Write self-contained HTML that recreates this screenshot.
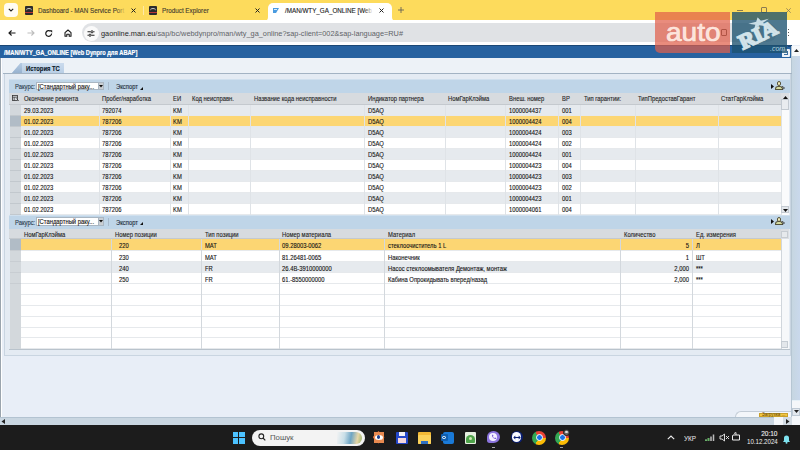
<!DOCTYPE html><html><head><meta charset="utf-8"><style>
*{margin:0;padding:0;box-sizing:border-box}
html,body{width:800px;height:450px;overflow:hidden;background:#e8eef7;font-family:"Liberation Sans", sans-serif;}
.a{position:absolute}
.t{position:absolute;white-space:nowrap;font-size:6.8px;line-height:11px;color:#141414}
.s,.sr{-webkit-text-stroke:0.12px currentColor}
.s{transform:scaleX(.86);transform-origin:0 0}
.sr{transform:scaleX(.86);transform-origin:100% 0}
</style></head><body>
<div class="a" style="left:0;top:0;width:800px;height:20.4px;background:#fddb5c"></div>
<div class="a" style="left:4px;top:3px;width:14px;height:14px;background:#fffcf3;border-radius:4px"></div>
<svg class="a" style="left:8px;top:8px" width="6" height="4" viewBox="0 0 6 4"><path d="M0.8 0.8 L3 3 L5.2 0.8" stroke="#222" stroke-width="1.1" fill="none"/></svg>
<div class="a" style="left:24.5px;top:6px;width:8.5px;height:8.5px;background:#2b2b2b;border-radius:1px"></div>
<div class="a" style="left:25.5px;top:8px;width:6.5px;height:3px;border-top:1px solid #ccc;border-radius:4px 4px 0 0"></div>
<div class="a" style="left:24.5px;top:12px;width:8.5px;height:1px;background:#b33"></div>
<div class="t s" style="left:37.5px;top:4.5px;font-size:7.3px;line-height:12px;color:#3d3a2e">Dashboard - MAN Service Port</div>
<div class="a" style="left:116px;top:4px;width:12px;height:12px;background:linear-gradient(90deg,rgba(253,219,92,0),#fddb5c 80%)"></div>
<svg class="a" style="left:131px;top:7.5px" width="5" height="5" viewBox="0 0 5 5"><path d="M0.5 0.5L4.5 4.5M4.5 0.5L0.5 4.5" stroke="#222" stroke-width="1"/></svg>
<div class="a" style="left:143px;top:6px;width:1px;height:9px;background:#fde9a6"></div>
<div class="a" style="left:148.5px;top:6px;width:8.5px;height:8.5px;background:#2b2b2b;border-radius:1px"></div>
<div class="a" style="left:149.5px;top:8px;width:6.5px;height:3px;border-top:1px solid #ccc;border-radius:4px 4px 0 0"></div>
<div class="a" style="left:148.5px;top:12px;width:8.5px;height:1px;background:#b33"></div>
<div class="t s" style="left:161.5px;top:4.5px;font-size:7.3px;line-height:12px;color:#3d3a2e">Product Explorer</div>
<svg class="a" style="left:255px;top:7.5px" width="5" height="5" viewBox="0 0 5 5"><path d="M0.5 0.5L4.5 4.5M4.5 0.5L0.5 4.5" stroke="#222" stroke-width="1"/></svg>
<div class="a" style="left:268px;top:3px;width:124px;height:18px;background:#fff;border-radius:5px 5px 0 0"></div>
<div class="a" style="left:264px;top:15px;width:4px;height:6px;background:#fff"></div>
<div class="a" style="left:260px;top:11px;width:8px;height:10px;background:#fddb5c;border-radius:0 0 4px 0"></div>
<div class="a" style="left:392px;top:15px;width:4px;height:6px;background:#fff"></div>
<div class="a" style="left:392px;top:11px;width:8px;height:10px;background:#fddb5c;border-radius:0 0 0 4px"></div>
<div class="a" style="left:272.5px;top:8px;width:6.5px;height:5px;background:#4a9be0;clip-path:polygon(0 0,100% 0,55% 100%,0 100%)"></div>
<div class="a" style="left:273.5px;top:9.3px;width:3.5px;height:1px;background:#fff;opacity:.8"></div>
<div class="t s" style="left:285px;top:4.5px;font-size:7.3px;line-height:12px;color:#202020">/MAN/WTY_GA_ONLINE [Web</div>
<div class="a" style="left:364px;top:4px;width:12px;height:12px;background:linear-gradient(90deg,rgba(255,255,255,0),#fff 75%)"></div>
<svg class="a" style="left:379px;top:7.5px" width="5" height="5" viewBox="0 0 5 5"><path d="M0.5 0.5L4.5 4.5M4.5 0.5L0.5 4.5" stroke="#222" stroke-width="1"/></svg>
<svg class="a" style="left:397.5px;top:7px" width="6" height="6" viewBox="0 0 6 6"><path d="M3 0V6M0 3H6" stroke="#555" stroke-width="0.8"/></svg>
<div class="a" style="left:737px;top:10px;width:6px;height:0.8px;background:#8a7a50"></div>
<div class="a" style="left:761px;top:6.5px;width:6px;height:6px;border:0.8px solid #8a7a50;border-radius:1px"></div>
<svg class="a" style="left:785.5px;top:7.5px" width="5" height="5" viewBox="0 0 5 5"><path d="M0.3 0.3L4.7 4.7M4.7 0.3L0.3 4.7" stroke="#8a7a50" stroke-width="0.8"/></svg>
<div class="a" style="left:0;top:20.4px;width:800px;height:25px;background:#fff"></div>
<svg class="a" style="left:8px;top:30px" width="8" height="6" viewBox="0 0 8 6"><path d="M7.5 3H1M3.6 0.5L1 3L3.6 5.5" stroke="#1a1a1a" stroke-width="1.15" fill="none"/></svg>
<svg class="a" style="left:26.5px;top:30px" width="8" height="6" viewBox="0 0 8 6"><path d="M0.5 3H7M4.4 0.5L7 3L4.4 5.5" stroke="#bdbdbd" stroke-width="1.1" fill="none"/></svg>
<svg class="a" style="left:45px;top:29.5px" width="8" height="7" viewBox="0 0 8 7"><path d="M6.6 3.6A2.9 2.9 0 1 1 5.6 1.3" stroke="#1a1a1a" stroke-width="1.15" fill="none"/><path d="M4.6 0.2H7.2V2.8Z" fill="#1a1a1a"/></svg>
<svg class="a" style="left:63.5px;top:29px" width="8" height="8" viewBox="0 0 8 8"><path d="M1 3.6L4 1L7 3.6V7.3H5.2V5.2H2.8V7.3H1Z" stroke="#1a1a1a" stroke-width="1.1" fill="none" stroke-linejoin="round"/></svg>
<div class="a" style="left:82px;top:22.6px;width:695px;height:19.8px;background:#e0e2e5;border-radius:10px"></div>
<div class="a" style="left:83.5px;top:25.5px;width:15px;height:15px;background:#fafafa;border-radius:8px"></div>
<svg class="a" style="left:87px;top:29.5px" width="8" height="7" viewBox="0 0 8 7"><path d="M0.5 1.8H3.5M6.5 1.8H7.5M0.5 5.2H1.5M4.5 5.2H7.5" stroke="#222" stroke-width="1.1"/><circle cx="5" cy="1.8" r="1.1" stroke="#222" stroke-width="1" fill="none"/><circle cx="3" cy="5.2" r="1.1" stroke="#222" stroke-width="1" fill="none"/></svg>
<div class="t" style="left:100.5px;top:28px;font-size:7.6px;line-height:12px;color:#1f1f1f;transform:scaleX(.968);transform-origin:0 0">gaonline.man.eu<span style="color:#5f6368">/sap/bc/webdynpro/man/wty_ga_online?sap-client=002&amp;sap-language=RU#</span></div>
<div class="a" style="left:787.8px;top:28.8px;width:1.6px;height:1.6px;background:#222;border-radius:50%"></div>
<div class="a" style="left:787.8px;top:31.8px;width:1.6px;height:1.6px;background:#222;border-radius:50%"></div>
<div class="a" style="left:787.8px;top:34.8px;width:1.6px;height:1.6px;background:#222;border-radius:50%"></div>
<div class="a" style="left:0;top:45.3px;width:791.5px;height:12.5px;background:#2762a0;border-top:1px solid #1b4775"></div>
<div class="t s" style="left:4px;top:46.8px;font-size:6.6px;line-height:11px;color:#fff;font-weight:bold;-webkit-text-stroke:0.2px #fff">/MAN/WTY_GA_ONLINE [Web Dynpro для ABAP]</div>
<div class="a" style="left:782px;top:48.5px;width:8px;height:8px;background:#eef3f8;border-radius:1px"></div>
<div class="a" style="left:784px;top:50.5px;width:4px;height:4px;border-right:1.2px solid #3a6ea0;border-bottom:1.2px solid #3a6ea0"></div>
<div class="a" style="left:790.8px;top:46px;width:9.2px;height:371px;background:#e6f1f8;border-left:1px solid #b6c6d3"></div>
<div class="a" style="left:792px;top:56px;width:8px;height:344px;background:linear-gradient(90deg,#c6d6e1,#c9d8ec)"></div>
<div class="a" style="left:791.5px;top:46px;width:8.5px;height:10px;background:#f7f9fb"></div>
<svg class="a" style="left:793.5px;top:49px" width="5" height="3" viewBox="0 0 5 3"><path d="M0 3H5L2.5 0Z" fill="#222"/></svg>
<div class="a" style="left:791.5px;top:400.5px;width:8.5px;height:16.5px;background:#f4f7fa"></div>
<div class="a" style="left:791.5px;top:407.5px;width:8.5px;height:8px;background:#e3e9ef;border:1px solid #bfcad5"></div>
<svg class="a" style="left:793.5px;top:410px" width="5" height="3" viewBox="0 0 5 3"><path d="M0 0H5L2.5 3Z" fill="#222"/></svg>
<div class="a" style="left:788px;top:46px;width:3.3px;height:11.8px;background:#2762a0;border-top:1px solid #1b4775"></div>
<div class="a" style="left:782px;top:48.5px;width:8px;height:8px;background:#eef3f8;border-radius:1px"></div>
<div class="a" style="left:784px;top:50.5px;width:4px;height:4px;border-right:1.2px solid #3a6ea0;border-bottom:1.2px solid #3a6ea0"></div>
<div class="a" style="left:0;top:58px;width:2px;height:359px;background:#9aa4ad;border-right:1px solid #fff"></div>
<div class="a" style="left:3px;top:57.8px;width:788px;height:15.5px;background:#edf2f7"></div>
<div class="a" style="left:3px;top:73px;width:788.5px;height:1px;background:#a3b3c3"></div>
<div class="a" style="left:12px;top:62.5px;width:52px;height:10.5px;background:linear-gradient(180deg,#cbdbed,#b9cfe6);clip-path:polygon(9px 0,100% 0,100% 100%,0 100%);"></div>
<div class="a" style="left:12px;top:62.5px;width:10px;height:10.5px;background:linear-gradient(180deg,#b5cbe3,#98b2cf);clip-path:polygon(9px 0,100% 0,100% 100%,0 100%);"></div>
<div class="t s" style="left:25.5px;top:62.8px;font-size:6.8px;line-height:11px;color:#0a1626;font-weight:bold">История ТС</div>
<div class="a" style="left:4px;top:74px;width:786.5px;height:282px;background:#e4ebf3;border:1px solid #c9d5e1;border-top:none"></div>
<div class="a" style="left:9px;top:79px;width:781px;height:13.5px;background:#bfd5e8;border-top:1px solid #d0e0ee"></div>
<div class="t s" style="left:15px;top:80.5px;font-size:6.8px;line-height:12.5px;color:#2a3a4c">Ракурс:</div>
<div class="a" style="left:36.3px;top:81.7px;width:67.7px;height:8.6px;background:#fff;border:1px solid #a9b6c2;border-right:none"></div>
<div class="t s" style="left:37.5px;top:81.5px;font-size:6.8px;line-height:9px;color:#111">[Стандартный раку...</div>
<div class="a" style="left:98.2px;top:81.7px;width:5.8px;height:8.6px;background:#c9ced3;border:1px solid #a9b6c2"></div>
<svg class="a" style="left:99.2px;top:84.7px" width="4" height="3" viewBox="0 0 4 3"><path d="M0 0H4L2 2.5Z" fill="#111"/></svg>
<div class="a" style="left:108px;top:82px;width:1px;height:8px;background:#a7bacc"></div>
<div class="t s" style="left:115.5px;top:80.5px;font-size:6.8px;line-height:12.5px;color:#1c2a38">Экспорт</div>
<svg class="a" style="left:139.5px;top:86.5px" width="3" height="3" viewBox="0 0 3 3"><path d="M0 3H3V0Z" fill="#111"/></svg>
<svg class="a" style="left:770.5px;top:83.5px" width="3" height="5" viewBox="0 0 3 5"><path d="M0 0L3 2.5L0 5Z" fill="#111"/></svg>
<div class="a" style="left:776.5px;top:81.3px;width:4.5px;height:4.5px;border-radius:50%;background:#f1ebb8;border:1px solid #55523a"></div>
<div class="a" style="left:775px;top:85.6px;width:7.5px;height:4.2px;border-radius:4px 4px 1px 1px;background:#d4dba0;border:1px solid #55523a"></div>
<svg class="a" style="left:781.5px;top:85.5px" width="3" height="4" viewBox="0 0 3 4"><path d="M0 0.3L2.6 2L0 3.7" stroke="#333" stroke-width="0.8" fill="none"/></svg>
<div class="a" style="left:9px;top:92.7px;width:772px;height:12px;background:#d7dbdf;border-bottom:1px solid #c4c9ce"></div>
<svg class="a" style="left:12px;top:95.10000000000001px" width="7" height="6" viewBox="0 0 7 6"><rect x="0.5" y="0.5" width="5" height="5" fill="none" stroke="#333" stroke-width="0.8"/><path d="M0.5 2.2H5.5M2.2 2.2V5.5" stroke="#333" stroke-width="0.7"/><path d="M4.5 3.5L6.8 5.8" stroke="#333" stroke-width="0.8"/></svg>
<div class="t s" style="left:24.0px;top:93.2px;color:#1e1e1e">Окончание ремонта</div>
<div class="t s" style="left:102.0px;top:93.2px;color:#1e1e1e">Пробег/наработка</div>
<div class="t s" style="left:173.0px;top:93.2px;color:#1e1e1e">ЕИ</div>
<div class="t s" style="left:191.5px;top:93.2px;color:#1e1e1e">Код неисправн.</div>
<div class="t s" style="left:253.5px;top:93.2px;color:#1e1e1e">Название кода неисправности</div>
<div class="t s" style="left:367.5px;top:93.2px;color:#1e1e1e">Индикатор партнера</div>
<div class="t s" style="left:448.0px;top:93.2px;color:#1e1e1e">НомГарКлэйма</div>
<div class="t s" style="left:508.5px;top:93.2px;color:#1e1e1e">Внеш. номер</div>
<div class="t s" style="left:561.5px;top:93.2px;color:#1e1e1e">ВР</div>
<div class="t s" style="left:583.8px;top:93.2px;color:#1e1e1e">Тип гарантии:</div>
<div class="t s" style="left:638.3px;top:93.2px;color:#1e1e1e">ТипПредоставГарант</div>
<div class="t s" style="left:721.0px;top:93.2px;color:#1e1e1e">СтатГарКлэйма</div>
<div class="a" style="left:20.5px;top:104.7px;width:760px;height:11.05px;background:#e6eaee;border-bottom:1px solid #e6e9ec"></div>
<div class="a" style="left:9.5px;top:104.7px;width:11px;height:11.05px;background:#d3d8dc;border-bottom:1px solid #c2c8cd"></div>
<div class="t s" style="left:24.0px;top:105.0px">29.03.2023</div>
<div class="t s" style="left:102.0px;top:105.0px">792074</div>
<div class="t s" style="left:173.0px;top:105.0px">KM</div>
<div class="t s" style="left:367.5px;top:105.0px">D5AQ</div>
<div class="t s" style="left:508.5px;top:105.0px">1000004437</div>
<div class="t s" style="left:561.5px;top:105.0px">001</div>
<div class="a" style="left:20.5px;top:115.7px;width:760px;height:11.05px;background:#fcd673;border-bottom:1px solid #e6e9ec"></div>
<div class="a" style="left:9.5px;top:115.7px;width:11px;height:11.05px;background:#b1bcc6;border-bottom:1px solid #c2c8cd"></div>
<div class="t s" style="left:24.0px;top:116.0px">01.02.2023</div>
<div class="t s" style="left:102.0px;top:116.0px">787206</div>
<div class="t s" style="left:173.0px;top:116.0px">KM</div>
<div class="t s" style="left:367.5px;top:116.0px">D5AQ</div>
<div class="t s" style="left:508.5px;top:116.0px">1000004424</div>
<div class="t s" style="left:561.5px;top:116.0px">004</div>
<div class="a" style="left:20.5px;top:126.7px;width:760px;height:11.05px;background:#e6eaee;border-bottom:1px solid #e6e9ec"></div>
<div class="a" style="left:9.5px;top:126.7px;width:11px;height:11.05px;background:#d3d8dc;border-bottom:1px solid #c2c8cd"></div>
<div class="t s" style="left:24.0px;top:127.0px">01.02.2023</div>
<div class="t s" style="left:102.0px;top:127.0px">787206</div>
<div class="t s" style="left:173.0px;top:127.0px">KM</div>
<div class="t s" style="left:367.5px;top:127.0px">D5AQ</div>
<div class="t s" style="left:508.5px;top:127.0px">1000004424</div>
<div class="t s" style="left:561.5px;top:127.0px">003</div>
<div class="a" style="left:20.5px;top:137.7px;width:760px;height:11.05px;background:#ffffff;border-bottom:1px solid #e6e9ec"></div>
<div class="a" style="left:9.5px;top:137.7px;width:11px;height:11.05px;background:#d3d8dc;border-bottom:1px solid #c2c8cd"></div>
<div class="t s" style="left:24.0px;top:138.0px">01.02.2023</div>
<div class="t s" style="left:102.0px;top:138.0px">787206</div>
<div class="t s" style="left:173.0px;top:138.0px">KM</div>
<div class="t s" style="left:367.5px;top:138.0px">D5AQ</div>
<div class="t s" style="left:508.5px;top:138.0px">1000004424</div>
<div class="t s" style="left:561.5px;top:138.0px">002</div>
<div class="a" style="left:20.5px;top:148.7px;width:760px;height:11.05px;background:#e6eaee;border-bottom:1px solid #e6e9ec"></div>
<div class="a" style="left:9.5px;top:148.7px;width:11px;height:11.05px;background:#d3d8dc;border-bottom:1px solid #c2c8cd"></div>
<div class="t s" style="left:24.0px;top:149.0px">01.02.2023</div>
<div class="t s" style="left:102.0px;top:149.0px">787206</div>
<div class="t s" style="left:173.0px;top:149.0px">KM</div>
<div class="t s" style="left:367.5px;top:149.0px">D5AQ</div>
<div class="t s" style="left:508.5px;top:149.0px">1000004424</div>
<div class="t s" style="left:561.5px;top:149.0px">001</div>
<div class="a" style="left:20.5px;top:159.7px;width:760px;height:11.05px;background:#ffffff;border-bottom:1px solid #e6e9ec"></div>
<div class="a" style="left:9.5px;top:159.7px;width:11px;height:11.05px;background:#d3d8dc;border-bottom:1px solid #c2c8cd"></div>
<div class="t s" style="left:24.0px;top:160.0px">01.02.2023</div>
<div class="t s" style="left:102.0px;top:160.0px">787206</div>
<div class="t s" style="left:173.0px;top:160.0px">KM</div>
<div class="t s" style="left:367.5px;top:160.0px">D5AQ</div>
<div class="t s" style="left:508.5px;top:160.0px">1000004423</div>
<div class="t s" style="left:561.5px;top:160.0px">004</div>
<div class="a" style="left:20.5px;top:170.7px;width:760px;height:11.05px;background:#e6eaee;border-bottom:1px solid #e6e9ec"></div>
<div class="a" style="left:9.5px;top:170.7px;width:11px;height:11.05px;background:#d3d8dc;border-bottom:1px solid #c2c8cd"></div>
<div class="t s" style="left:24.0px;top:171.0px">01.02.2023</div>
<div class="t s" style="left:102.0px;top:171.0px">787206</div>
<div class="t s" style="left:173.0px;top:171.0px">KM</div>
<div class="t s" style="left:367.5px;top:171.0px">D5AQ</div>
<div class="t s" style="left:508.5px;top:171.0px">1000004423</div>
<div class="t s" style="left:561.5px;top:171.0px">003</div>
<div class="a" style="left:20.5px;top:181.7px;width:760px;height:11.05px;background:#ffffff;border-bottom:1px solid #e6e9ec"></div>
<div class="a" style="left:9.5px;top:181.7px;width:11px;height:11.05px;background:#d3d8dc;border-bottom:1px solid #c2c8cd"></div>
<div class="t s" style="left:24.0px;top:182.0px">01.02.2023</div>
<div class="t s" style="left:102.0px;top:182.0px">787206</div>
<div class="t s" style="left:173.0px;top:182.0px">KM</div>
<div class="t s" style="left:367.5px;top:182.0px">D5AQ</div>
<div class="t s" style="left:508.5px;top:182.0px">1000004423</div>
<div class="t s" style="left:561.5px;top:182.0px">002</div>
<div class="a" style="left:20.5px;top:192.7px;width:760px;height:11.05px;background:#e6eaee;border-bottom:1px solid #e6e9ec"></div>
<div class="a" style="left:9.5px;top:192.7px;width:11px;height:11.05px;background:#d3d8dc;border-bottom:1px solid #c2c8cd"></div>
<div class="t s" style="left:24.0px;top:193.0px">01.02.2023</div>
<div class="t s" style="left:102.0px;top:193.0px">787206</div>
<div class="t s" style="left:173.0px;top:193.0px">KM</div>
<div class="t s" style="left:367.5px;top:193.0px">D5AQ</div>
<div class="t s" style="left:508.5px;top:193.0px">1000004423</div>
<div class="t s" style="left:561.5px;top:193.0px">001</div>
<div class="a" style="left:20.5px;top:203.7px;width:760px;height:11.05px;background:#ffffff;border-bottom:1px solid #e6e9ec"></div>
<div class="a" style="left:9.5px;top:203.7px;width:11px;height:11.05px;background:#d3d8dc;border-bottom:1px solid #c2c8cd"></div>
<div class="t s" style="left:24.0px;top:204.0px">01.02.2023</div>
<div class="t s" style="left:102.0px;top:204.0px">787206</div>
<div class="t s" style="left:173.0px;top:204.0px">KM</div>
<div class="t s" style="left:367.5px;top:204.0px">D5AQ</div>
<div class="t s" style="left:508.5px;top:204.0px">1000004061</div>
<div class="t s" style="left:561.5px;top:204.0px">004</div>
<div class="a" style="left:98.5px;top:104.7px;width:1px;height:110px;background:#dfe3e7"></div>
<div class="a" style="left:169.5px;top:104.7px;width:1px;height:110px;background:#dfe3e7"></div>
<div class="a" style="left:188px;top:104.7px;width:1px;height:110px;background:#dfe3e7"></div>
<div class="a" style="left:250px;top:104.7px;width:1px;height:110px;background:#dfe3e7"></div>
<div class="a" style="left:364px;top:104.7px;width:1px;height:110px;background:#dfe3e7"></div>
<div class="a" style="left:444.5px;top:104.7px;width:1px;height:110px;background:#dfe3e7"></div>
<div class="a" style="left:505px;top:104.7px;width:1px;height:110px;background:#dfe3e7"></div>
<div class="a" style="left:558px;top:104.7px;width:1px;height:110px;background:#dfe3e7"></div>
<div class="a" style="left:580.3px;top:104.7px;width:1px;height:110px;background:#dfe3e7"></div>
<div class="a" style="left:634.8px;top:104.7px;width:1px;height:110px;background:#dfe3e7"></div>
<div class="a" style="left:717.5px;top:104.7px;width:1px;height:110px;background:#dfe3e7"></div>
<div class="a" style="left:780.8px;top:92.7px;width:8px;height:121.99999999999999px;background:#fafbfc;border-left:1px solid #dde2e6"></div>
<div class="a" style="left:780.8px;top:92.7px;width:8px;height:12.0px;background:#dcdfe3"></div>
<svg class="a" style="left:782.5px;top:95.7px" width="5" height="3" viewBox="0 0 5 3"><path d="M0 3H5L2.5 0Z" fill="#111"/></svg>
<div class="a" style="left:781px;top:99px;width:7.5px;height:11px;background:#e9ecef;border:1px solid #c3cad1"></div>
<div class="a" style="left:781px;top:206.2px;width:7.5px;height:7px;background:#e3e7eb;border:1px solid #c3cad1"></div>
<svg class="a" style="left:782.5px;top:208.7px" width="5" height="3" viewBox="0 0 5 3"><path d="M0 0H5L2.5 3Z" fill="#111"/></svg>
<div class="a" style="left:9px;top:214.7px;width:781px;height:14px;background:#bfd5e8;border-top:1px solid #d0e0ee"></div>
<div class="t s" style="left:15px;top:216.2px;font-size:6.8px;line-height:13px;color:#2a3a4c">Ракурс:</div>
<div class="a" style="left:36.3px;top:217.39999999999998px;width:67.7px;height:8.6px;background:#fff;border:1px solid #a9b6c2;border-right:none"></div>
<div class="t s" style="left:37.5px;top:217.2px;font-size:6.8px;line-height:9px;color:#111">[Стандартный раку...</div>
<div class="a" style="left:98.2px;top:217.39999999999998px;width:5.8px;height:8.6px;background:#c9ced3;border:1px solid #a9b6c2"></div>
<svg class="a" style="left:99.2px;top:220.39999999999998px" width="4" height="3" viewBox="0 0 4 3"><path d="M0 0H4L2 2.5Z" fill="#111"/></svg>
<div class="a" style="left:108px;top:217.7px;width:1px;height:8px;background:#a7bacc"></div>
<div class="t s" style="left:115.5px;top:216.2px;font-size:6.8px;line-height:13px;color:#1c2a38">Экспорт</div>
<svg class="a" style="left:139.5px;top:222.2px" width="3" height="3" viewBox="0 0 3 3"><path d="M0 3H3V0Z" fill="#111"/></svg>
<svg class="a" style="left:770.5px;top:219.2px" width="3" height="5" viewBox="0 0 3 5"><path d="M0 0L3 2.5L0 5Z" fill="#111"/></svg>
<div class="a" style="left:776.5px;top:217.0px;width:4.5px;height:4.5px;border-radius:50%;background:#f1ebb8;border:1px solid #55523a"></div>
<div class="a" style="left:775px;top:221.29999999999998px;width:7.5px;height:4.2px;border-radius:4px 4px 1px 1px;background:#d4dba0;border:1px solid #55523a"></div>
<svg class="a" style="left:781.5px;top:221.2px" width="3" height="4" viewBox="0 0 3 4"><path d="M0 0.3L2.6 2L0 3.7" stroke="#333" stroke-width="0.8" fill="none"/></svg>
<div class="a" style="left:9px;top:228.5px;width:772px;height:10.699999999999989px;background:#d7dbdf;border-bottom:1px solid #c4c9ce"></div>
<div class="t s" style="left:24.0px;top:228.8px;color:#1e1e1e">НомГарКлэйма</div>
<div class="t s" style="left:114.5px;top:228.8px;color:#1e1e1e">Номер позиции</div>
<div class="t s" style="left:204.5px;top:228.8px;color:#1e1e1e">Тип позиции</div>
<div class="t s" style="left:282.0px;top:228.8px;color:#1e1e1e">Номер материала</div>
<div class="t s" style="left:387.5px;top:228.8px;color:#1e1e1e">Материал</div>
<div class="t s" style="left:623.5px;top:228.8px;color:#1e1e1e">Количество</div>
<div class="t s" style="left:695.5px;top:228.8px;color:#1e1e1e">Ед. измерения</div>
<div class="a" style="left:20.5px;top:239.2px;width:760px;height:12.05px;background:#fcd673;border-bottom:1px solid #e6e9ec"></div>
<div class="a" style="left:9.5px;top:239.2px;width:11px;height:12.05px;background:#b1bcc6;border-bottom:1px solid #c8cdd2"></div>
<div class="t s" style="left:118.5px;top:240.35000000000002px">220</div>
<div class="t s" style="left:204.5px;top:240.35000000000002px">MAT</div>
<div class="t s" style="left:282px;top:240.35000000000002px">09.28003-0062</div>
<div class="t s" style="left:387.5px;top:240.35000000000002px">стеклоочиститель 1 L</div>
<div class="t sr" style="left:620px;width:69px;text-align:right;top:240.35000000000002px">5</div>
<div class="t s" style="left:695.5px;top:240.35000000000002px">Л</div>
<div class="a" style="left:20.5px;top:251.2px;width:760px;height:10.950000000000001px;background:#ffffff;border-bottom:1px solid #e6e9ec"></div>
<div class="a" style="left:9.5px;top:251.2px;width:11px;height:10.950000000000001px;background:#d3d8dc;border-bottom:1px solid #c8cdd2"></div>
<div class="t s" style="left:118.5px;top:251.8px">230</div>
<div class="t s" style="left:204.5px;top:251.8px">MAT</div>
<div class="t s" style="left:282px;top:251.8px">81.26481-0065</div>
<div class="t s" style="left:387.5px;top:251.8px">Наконечник</div>
<div class="t sr" style="left:620px;width:69px;text-align:right;top:251.8px">1</div>
<div class="t s" style="left:695.5px;top:251.8px">ШТ</div>
<div class="a" style="left:20.5px;top:262.09999999999997px;width:760px;height:10.950000000000001px;background:#e6eaee;border-bottom:1px solid #e6e9ec"></div>
<div class="a" style="left:9.5px;top:262.09999999999997px;width:11px;height:10.950000000000001px;background:#d3d8dc;border-bottom:1px solid #c8cdd2"></div>
<div class="t s" style="left:118.5px;top:262.7px">240</div>
<div class="t s" style="left:204.5px;top:262.7px">FR</div>
<div class="t s" style="left:282px;top:262.7px">26.4B-3910000000</div>
<div class="t s" style="left:387.5px;top:262.7px">Насос стеклоомывателя Демонтаж, монтаж</div>
<div class="t sr" style="left:620px;width:69px;text-align:right;top:262.7px">2,000</div>
<div class="t s" style="left:695.5px;top:262.7px">***</div>
<div class="a" style="left:20.5px;top:273.0px;width:760px;height:10.950000000000001px;background:#ffffff;border-bottom:1px solid #e6e9ec"></div>
<div class="a" style="left:9.5px;top:273.0px;width:11px;height:10.950000000000001px;background:#d3d8dc;border-bottom:1px solid #c8cdd2"></div>
<div class="t s" style="left:118.5px;top:273.6px">250</div>
<div class="t s" style="left:204.5px;top:273.6px">FR</div>
<div class="t s" style="left:282px;top:273.6px">61.-8550000000</div>
<div class="t s" style="left:387.5px;top:273.6px">Кабина Опрокидывать вперед/назад</div>
<div class="t sr" style="left:620px;width:69px;text-align:right;top:273.6px">2,000</div>
<div class="t s" style="left:695.5px;top:273.6px">***</div>
<div class="a" style="left:20.5px;top:283.9px;width:760px;height:10.950000000000001px;background:#ffffff;border-bottom:1px solid #e6e9ec"></div>
<div class="a" style="left:9.5px;top:283.9px;width:11px;height:10.950000000000001px;background:#d3d8dc;border-bottom:none"></div>
<div class="a" style="left:20.5px;top:294.8px;width:760px;height:10.950000000000001px;background:#ffffff;border-bottom:1px solid #e6e9ec"></div>
<div class="a" style="left:9.5px;top:294.8px;width:11px;height:10.950000000000001px;background:#d3d8dc;border-bottom:none"></div>
<div class="a" style="left:20.5px;top:305.7px;width:760px;height:10.950000000000001px;background:#ffffff;border-bottom:1px solid #e6e9ec"></div>
<div class="a" style="left:9.5px;top:305.7px;width:11px;height:10.950000000000001px;background:#d3d8dc;border-bottom:none"></div>
<div class="a" style="left:20.5px;top:316.59999999999997px;width:760px;height:10.950000000000001px;background:#ffffff;border-bottom:1px solid #e6e9ec"></div>
<div class="a" style="left:9.5px;top:316.59999999999997px;width:11px;height:10.950000000000001px;background:#d3d8dc;border-bottom:none"></div>
<div class="a" style="left:20.5px;top:327.5px;width:760px;height:10.950000000000001px;background:#ffffff;border-bottom:1px solid #e6e9ec"></div>
<div class="a" style="left:9.5px;top:327.5px;width:11px;height:10.950000000000001px;background:#d3d8dc;border-bottom:none"></div>
<div class="a" style="left:20.5px;top:338.4px;width:760px;height:10.950000000000001px;background:#ffffff;border-bottom:1px solid #e6e9ec"></div>
<div class="a" style="left:9.5px;top:338.4px;width:11px;height:10.950000000000001px;background:#d3d8dc;border-bottom:none"></div>
<div class="a" style="left:111px;top:239.2px;width:1px;height:110.1px;background:#d3d8dd"></div>
<div class="a" style="left:201px;top:239.2px;width:1px;height:110.1px;background:#d3d8dd"></div>
<div class="a" style="left:278.5px;top:239.2px;width:1px;height:110.1px;background:#d3d8dd"></div>
<div class="a" style="left:384px;top:239.2px;width:1px;height:110.1px;background:#d3d8dd"></div>
<div class="a" style="left:620px;top:239.2px;width:1px;height:110.1px;background:#d3d8dd"></div>
<div class="a" style="left:692px;top:239.2px;width:1px;height:110.1px;background:#d3d8dd"></div>
<div class="a" style="left:9px;top:349.3px;width:781px;height:1px;background:#b9c3cc"></div>
<div class="a" style="left:780.5px;top:228.5px;width:8px;height:120.80000000000001px;background:#f6f8fa;border-left:1px solid #d0d6dc"></div>
<div class="a" style="left:780.8px;top:228.5px;width:8px;height:10.699999999999989px;background:#dcdfe3"></div>
<div class="a" style="left:781.3px;top:230.5px;width:7px;height:7px;background:#e6e9ec;border:1px solid #c6ccd2"></div>
<div class="a" style="left:781px;top:341.3px;width:7px;height:7px;background:#e3e7eb;border:1px solid #c5ccd3"></div>
<div class="a" style="left:0;top:417px;width:800px;height:8px;background:#c9d6e1;border-top:1px solid #b3c3d1"></div>
<div class="a" style="left:773.7px;top:417px;width:9.3px;height:8px;background:#f4f7fa"></div>
<div class="a" style="left:783px;top:417px;width:8.5px;height:8px;background:#d3dce4"></div>
<div class="a" style="left:791.5px;top:416px;width:8.5px;height:9px;background:#f4f7fa"></div>
<svg class="a" style="left:1px;top:419px" width="4" height="5" viewBox="0 0 4 5"><path d="M4 0L0.5 2.5L4 5Z" fill="#222"/></svg>
<svg class="a" style="left:786px;top:419px" width="4" height="5" viewBox="0 0 4 5"><path d="M0 0L3.5 2.5L0 5Z" fill="#222"/></svg>
<div class="a" style="left:735px;top:411.3px;width:56px;height:5.9px;background:#f3f6fa;border-top:1px solid #c3ccd6;border-left:1px solid #c3ccd6;border-radius:16px 0 0 0"></div>
<div class="a" style="left:759.3px;top:413px;width:28.4px;height:4.3px;background:#f3c640;border:0.8px solid #c9a02a;overflow:hidden"></div>
<div class="t" style="left:762px;top:412.2px;font-size:4.5px;line-height:5px;color:#5a4410">Загрузка ...</div>
<div class="a" style="left:0;top:425px;width:800px;height:25px;background:#1c1c1c"></div>
<div class="a" style="left:232.5px;top:431.5px;width:5.5px;height:5.5px;background:#4cc2ff"></div>
<div class="a" style="left:239px;top:431.5px;width:5.5px;height:5.5px;background:#4cc2ff"></div>
<div class="a" style="left:232.5px;top:438px;width:5.5px;height:5.5px;background:#4cc2ff"></div>
<div class="a" style="left:239px;top:438px;width:5.5px;height:5.5px;background:#4cc2ff"></div>
<div class="a" style="left:252px;top:429.5px;width:113px;height:16px;background:#f3f3f3;border-radius:8px"></div>
<svg class="a" style="left:258px;top:433px" width="8" height="8" viewBox="0 0 8 8"><circle cx="3.3" cy="3.3" r="2.4" stroke="#222" stroke-width="1.1" fill="none"/><path d="M5 5L7.3 7.3" stroke="#222" stroke-width="1.2"/></svg>
<div class="t" style="left:270px;top:431.5px;font-size:7.8px;line-height:12px;color:#555">Пошук</div>
<div class="a" style="left:337px;top:432px;width:25px;height:12px;border-radius:0 6px 6px 0;background:linear-gradient(100deg,#f3f3f3 0%,#c9dfe8 30%,#6ea5c4 55%,#e6d6a8 80%,#98b46a 100%)"></div>
<div class="a" style="left:372.5px;top:431px;width:12px;height:12.5px;background:#de6a3a;clip-path:polygon(50% 0,100% 50%,50% 100%,0 50%);"></div>
<div class="a" style="left:373.5px;top:432px;width:10px;height:10.5px;background:#e88a50"></div>
<div class="a" style="left:374.5px;top:434.5px;width:8px;height:5px;background:#ffffff;border-radius:50%"></div>
<div class="a" style="left:377px;top:435.3px;width:3px;height:3.4px;background:#1e3f8a;border-radius:50%"></div>
<div class="a" style="left:396px;top:431.5px;width:11.5px;height:12px;background:#2447c9;border-radius:1px"></div>
<div class="a" style="left:397.5px;top:437.5px;width:8.5px;height:5px;background:#f4d6dc"></div>
<div class="a" style="left:398.5px;top:432.3px;width:6.5px;height:3.8px;background:#f0f0f8"></div>
<div class="a" style="left:418px;top:432px;width:13px;height:11.5px;background:#f3b935;border-radius:1px"></div>
<div class="a" style="left:418px;top:434.5px;width:13px;height:9px;background:#fcd25a;border-radius:1px"></div>
<div class="a" style="left:421px;top:440.5px;width:7px;height:3px;background:#2f6fc2"></div>
<div class="a" style="left:443px;top:431.5px;width:11px;height:12px;background:#1a7ad8;border-radius:2px"></div>
<div class="a" style="left:440.5px;top:434px;width:7px;height:7px;background:#0f5eaf;border-radius:1px"></div>
<div class="a" style="left:442.3px;top:435.8px;width:3.4px;height:3.4px;border:1px solid #fff;border-radius:50%"></div>
<div class="a" style="left:465px;top:431.5px;width:11px;height:12px;background:#e6efe0;border-radius:1px"></div>
<div class="a" style="left:466px;top:435px;width:9px;height:8px;background:#4ea24a;border-radius:50% 50% 1px 1px"></div>
<div class="a" style="left:469px;top:436.5px;width:3px;height:3px;background:#cfe8b0;border-radius:50%"></div>
<div class="a" style="left:487px;top:430.8px;width:12.8px;height:12px;background:#8b74dd;border-radius:50% 50% 50% 20%"></div>
<div class="a" style="left:489.3px;top:432.8px;width:8.2px;height:8px;background:#f4f0ff;border-radius:50%"></div>
<svg class="a" style="left:490.5px;top:434px" width="6" height="6" viewBox="0 0 6 6"><path d="M1 0.8C0.6 2.8 2.6 5 5 5.1L5.2 4L4 3.4L3.4 4C2.6 3.6 2.2 3.1 1.9 2.4L2.5 1.9L2 0.7Z" fill="#7a5fd6"/></svg>
<div class="a" style="left:492px;top:446.5px;width:3px;height:1.2px;background:#aaa"></div>
<div class="a" style="left:510.5px;top:431px;width:12px;height:12px;background:#0b1f74;border-radius:50%"></div>
<div class="a" style="left:511.8px;top:432.3px;width:9.4px;height:9.4px;background:#fafbff;border-radius:50%"></div>
<svg class="a" style="left:512.5px;top:434.5px" width="8" height="5" viewBox="0 0 8 5"><path d="M0.3 2.5L2.3 0.6V4.4Z M7.7 2.5L5.7 0.6V4.4Z" fill="#0b1f74"/><path d="M2 2.5H6" stroke="#0b1f74" stroke-width="1.1"/></svg>
<div class="a" style="left:532px;top:430.5px;width:14px;height:14px;border-radius:50%;background:conic-gradient(from -30deg,#ea4335 0 120deg,#fbbc05 120deg 240deg,#34a853 240deg 360deg)"></div>
<div class="a" style="left:535.5px;top:434px;width:7px;height:7px;border-radius:50%;background:#1a73e8;border:1.3px solid #fff"></div>
<div class="a" style="left:555px;top:430.5px;width:14px;height:14px;border-radius:50%;background:conic-gradient(from -30deg,#ea4335 0 120deg,#fbbc05 120deg 240deg,#34a853 240deg 360deg)"></div>
<div class="a" style="left:558.5px;top:434px;width:7px;height:7px;border-radius:50%;background:#1a73e8;border:1.3px solid #fff"></div>
<div class="a" style="left:563px;top:428.5px;width:7px;height:7px;border-radius:50%;background:#666;border:1px solid #1c1c1c"></div>
<div class="a" style="left:565.3px;top:430.5px;width:2.4px;height:2.4px;border-radius:50%;background:#ddd"></div>
<div class="a" style="left:560px;top:447px;width:3px;height:1px;background:#999"></div>
<svg class="a" style="left:667px;top:435px" width="8" height="5" viewBox="0 0 8 5"><path d="M0.8 4.2L4 1L7.2 4.2" stroke="#eee" stroke-width="1.1" fill="none"/></svg>
<div class="t" style="left:683.5px;top:433.5px;font-size:7px;line-height:10px;color:#eee;transform:scaleX(.92);transform-origin:0 0">УКР</div>
<svg class="a" style="left:705px;top:433px" width="10" height="9" viewBox="0 0 10 9"><path d="M1 8V6.5M3.5 8V5M6 8V3.5M8.5 8V1.5" stroke="#bbb" stroke-width="1.5"/><path d="M1 8V6.5M3.5 8V5" stroke="#5cb85c" stroke-width="1.5"/></svg>
<svg class="a" style="left:719px;top:433px" width="11" height="9" viewBox="0 0 11 9"><path d="M1 3H3L5.5 1V8L3 6H1Z" stroke="#eee" stroke-width="0.9" fill="none"/><path d="M7 3L10 6M10 3L7 6" stroke="#eee" stroke-width="0.9"/></svg>
<svg class="a" style="left:731px;top:432px" width="11" height="10" viewBox="0 0 11 10"><path d="M2 3H8.5V8H1.5V4Z" stroke="#eee" stroke-width="1" fill="none"/><path d="M3 1.5L5 0.5V3" stroke="#eee" stroke-width="0.9" fill="none"/></svg>
<div class="t sr" style="left:737px;width:40.5px;text-align:right;top:428.5px;font-size:7.6px;line-height:9px;color:#f0f0f0">20:10</div>
<div class="t" style="left:747.3px;top:437px;font-size:7.6px;line-height:9px;color:#f0f0f0;transform:scaleX(.81);transform-origin:0 0">10.12.2024</div>
<svg class="a" style="left:781.5px;top:433.5px" width="9" height="10" viewBox="0 0 9 10"><path d="M1 8H8L7 6.5V4A2.5 2.5 0 0 0 2 4V6.5Z" fill="#7fe3f0"/><circle cx="4.5" cy="8.8" r="1" fill="#7fe3f0"/></svg>
<div class="a" style="left:720.5px;top:29px;width:6.5px;height:6.5px;border:1px solid #333;border-radius:1px"></div>
<div class="a" style="left:655.3px;top:12px;width:74.4px;height:41.4px;background:rgba(225,95,75,0.72);border-radius:0 0 0 5px"></div>
<div class="t" style="left:665.5px;top:17px;font-size:26px;line-height:30px;color:rgba(255,236,228,0.93);-webkit-text-stroke:0.7px rgba(255,236,228,0.93);transform:scaleX(1.08);transform-origin:0 0">auto</div>
<div class="a" style="left:732.2px;top:12px;width:54.8px;height:41.4px;background:rgba(28,82,112,0.78)"></div>
<div class="t" style="left:738.5px;top:22.5px;font-size:21px;line-height:24px;color:rgba(213,230,236,0.96);font-family:'Liberation Serif',serif;font-weight:bold;-webkit-text-stroke:1.9px rgba(213,230,236,0.96);letter-spacing:-0.3px;transform:rotate(-25deg) scaleX(1.05);transform-origin:50% 50%">RIA</div>
<div class="a" style="left:747.5px;top:17px;width:22px;height:12px;background:rgba(212,230,238,0.92);clip-path:polygon(50% 0,61% 35%,98% 35%,68% 57%,79% 91%,50% 70%,21% 91%,32% 57%,2% 35%,39% 35%);transform:rotate(-14deg)"></div>
<div class="t" style="left:770px;top:44.5px;font-size:7px;line-height:8px;color:rgba(200,225,235,0.9);font-style:italic">.com</div>
</body></html>
